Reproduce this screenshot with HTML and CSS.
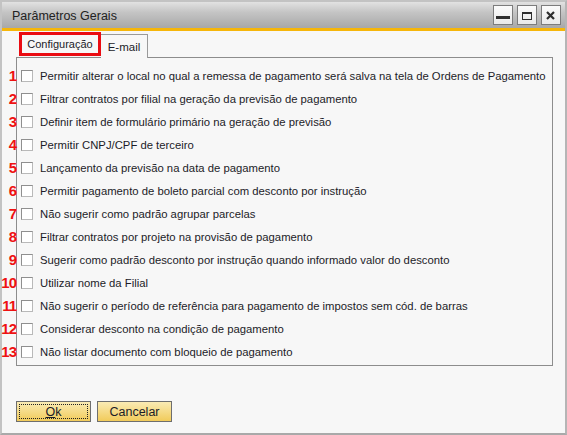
FILE: index.html
```html
<!DOCTYPE html>
<html lang="pt">
<head>
<meta charset="utf-8">
<title>Parâmetros Gerais</title>
<link rel="stylesheet" href="styles.css">
</head>
<body>
<div class="window">
  <div class="titlebar">
    <span class="title">Parâmetros Gerais</span>
    <div class="winbtns">
      <span class="winbtn"><svg width="18" height="18" viewBox="0 0 18 18"><rect x="2" y="10" width="14" height="3" fill="#2e2e2e"/></svg></span>
      <span class="winbtn"><svg width="18" height="18" viewBox="0 0 18 18"><rect x="4.5" y="6.5" width="9" height="7" fill="none" stroke="#2e2e2e" stroke-width="1"/><rect x="4" y="6" width="10" height="2" fill="#2e2e2e"/></svg></span>
      <span class="winbtn"><svg width="18" height="18" viewBox="0 0 18 18"><path d="M5 6 L12 13 M12 6 L5 13" stroke="#2e2e2e" stroke-width="2.2" fill="none"/></svg></span>
    </div>
  </div>
  <div class="body">
    <div class="tabs">
      <span class="tab active">Configuração</span>
      <span class="tab">E-mail</span>
    </div>
    <div class="panel">
      <div class="row"><span class="num">1</span><span class="check"></span><span class="label">Permitir alterar o local no qual a remessa de pagamento será salva na tela de Ordens de Pagamento</span></div>
      <div class="row"><span class="num">2</span><span class="check"></span><span class="label">Filtrar contratos por filial na geração da previsão de pagamento</span></div>
      <div class="row"><span class="num">3</span><span class="check"></span><span class="label">Definir item de formulário primário na geração de previsão</span></div>
      <div class="row"><span class="num">4</span><span class="check"></span><span class="label">Permitir CNPJ/CPF de terceiro</span></div>
      <div class="row"><span class="num">5</span><span class="check"></span><span class="label">Lançamento da previsão na data de pagamento</span></div>
      <div class="row"><span class="num">6</span><span class="check"></span><span class="label">Permitir pagamento de boleto parcial com desconto por instrução</span></div>
      <div class="row"><span class="num">7</span><span class="check"></span><span class="label">Não sugerir como padrão agrupar parcelas</span></div>
      <div class="row"><span class="num">8</span><span class="check"></span><span class="label">Filtrar contratos por projeto na provisão de pagamento</span></div>
      <div class="row"><span class="num">9</span><span class="check"></span><span class="label">Sugerir como padrão desconto por instrução quando informado valor do desconto</span></div>
      <div class="row"><span class="num">10</span><span class="check"></span><span class="label">Utilizar nome da Filial</span></div>
      <div class="row"><span class="num">11</span><span class="check"></span><span class="label">Não sugerir o período de referência para pagamento de impostos sem cód. de barras</span></div>
      <div class="row"><span class="num">12</span><span class="check"></span><span class="label">Considerar desconto na condição de pagamento</span></div>
      <div class="row"><span class="num">13</span><span class="check"></span><span class="label">Não listar documento com bloqueio de pagamento</span></div>
    </div>
    <div class="actions">
      <button class="btn focused"><span class="focus"><u>O</u>k</span></button>
      <button class="btn">Cancelar</button>
    </div>
  </div>
</div>
</body>
</html>
```

FILE: styles.css
```css
html, body {
  margin: 0;
  padding: 0;
  background: #ffffff;
}
body {
  font-family: "Liberation Sans", Arial, sans-serif;
  font-size: 11.3px;
  color: #1c1c28;
}
.window {
  width: 567px;
  height: 435px;
  box-sizing: border-box;
  border: 2px solid #c3c3c3;
  border-bottom-color: #a9a9a9;
  border-right-color: #b5b5b5;
  display: flex;
  flex-direction: column;
  background: #f7f7f7;
}
.titlebar {
  height: 26px;
  flex: none;
  display: flex;
  align-items: center;
  padding: 0 4px 0 10px;
  background: linear-gradient(#e2e2e2, #c4c4c4 40%, #a8a8a8);
  border-bottom: 3px solid #f6b60a;
}
.title {
  font-size: 12.5px;
  color: #222;
  padding-top: 1px;
}
.winbtns {
  margin-left: auto;
  display: flex;
  gap: 4px;
}
.winbtn {
  width: 18px;
  height: 18px;
  border: 1px solid #7c7c7c;
  background: linear-gradient(#fbfbfb, #e9e9e9);
  display: block;
}
.winbtn svg { display: block; }
.body {
  flex: 1;
  padding: 1px 12px 0 14px;
  display: flex;
  flex-direction: column;
}
.tabs {
  display: flex;
  align-items: flex-end;
  height: 26px;
  padding-left: 3px;
  position: relative;
  z-index: 1;
  margin-bottom: -1px;
}
.tab {
  box-sizing: border-box;
  height: 24px;
  width: 47px;
  border: 1px solid #9a9a9a;
  border-bottom: none;
  border-left: none;
  background: #f7f7f7;
  display: flex;
  align-items: center;
  justify-content: center;
  font-size: 11.5px;
}
.tab.active {
  height: 24px;
  width: 82px;
  border: 3px solid #ea0c12;
  margin-bottom: 2px;
  background: #f7f7f7;
  font-size: 11px;
}
.panel {
  height: 309px;
  box-sizing: border-box;
  border: 1px solid #8d8d8d;
  padding: 6px 0 0 4px;
  flex: none;
}
.row {
  height: 23px;
  display: flex;
  align-items: center;
  gap: 7px;
  position: relative;
}
.num {
  position: absolute;
  right: calc(100% + 5px);
  font-family: "Liberation Sans", Arial, sans-serif;
  font-weight: bold;
  font-size: 15px;
  letter-spacing: -1px;
  color: #ee1111;
}
.check {
  width: 12px;
  height: 12px;
  box-sizing: border-box;
  border: 1px solid #8f8f8f;
  border-right-color: #b9b9b9;
  border-bottom-color: #b9b9b9;
  background: #ffffff;
  flex: none;
}
.label {
  white-space: nowrap;
}
.actions {
  margin-top: 35px;
  display: flex;
  gap: 6px;
}
.btn {
  width: 75px;
  height: 21px;
  box-sizing: border-box;
  border: 1px solid #6e6e6e;
  background: linear-gradient(#faebb4, #f1cb5a);
  font-family: "Liberation Sans", Arial, sans-serif;
  font-size: 12.5px;
  color: #1c1c28;
  padding: 0;
  display: flex;
  align-items: center;
  justify-content: center;
}
.btn.focused { padding: 2px; }
.focus {
  flex: 1;
  align-self: stretch;
  border: 1px dotted #222;
  display: flex;
  align-items: center;
  justify-content: center;
}
```
